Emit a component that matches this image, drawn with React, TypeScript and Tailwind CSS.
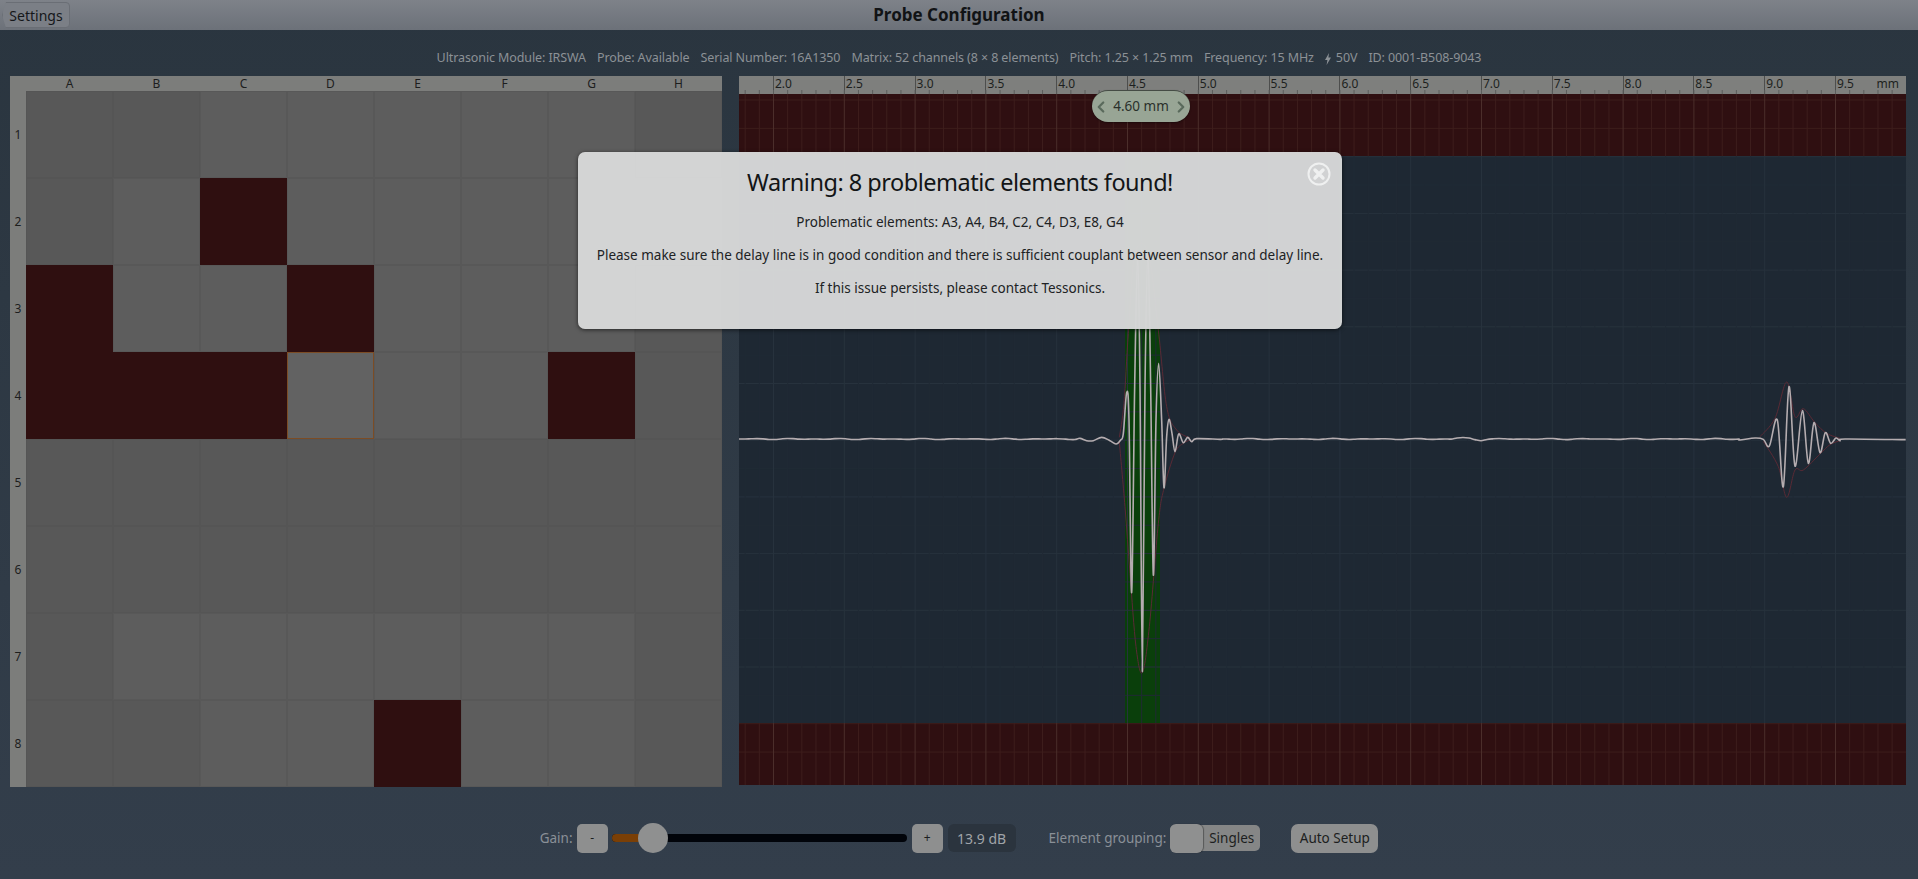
import { ChevronLeft, ChevronRight } from 'lucide-react';

type Pt = [number, number];

const COLS = ['A', 'B', 'C', 'D', 'E', 'F', 'G', 'H'];
const ROWS = [1, 2, 3, 4, 5, 6, 7, 8];

// d = darker, l = lighter, r = problematic, o = selected
const CELLS = [
  'ddllllld',
  'dlrlllll',
  'rllrllld',
  'rrrollrd',
  'dddddddd',
  'dddddddd',
  'dlllllld',
  'ddllrlld',
];

const CELL_CLASS: Record<string, string> = {
  d: 'bg-[#585858] border-[#555555]',
  l: 'bg-[#5d5d5d] border-[#585858]',
  r: 'bg-[#2f0f10] border-[#2f0f10]',
  o: 'bg-[#626262] border-[#7c4c24]',
};

const PX_PER_MM = 141.6;
const X_2MM = 34.5;
const mmX = (mm: number) => X_2MM + (mm - 2) * PX_PER_MM;

const TICKS = Array.from({ length: 82 }, (_, i) => i - 2);
const H_LINES = Array.from({ length: 24 }, (_, i) => 6 + i * 28.35);
const LABELS = ['2.0', '2.5', '3.0', '3.5', '4.0', '4.5', '5.0', '5.5', '6.0', '6.5', '7.0', '7.5', '8.0', '8.5', '9.0'];

const pulse: Pt[] = ([
  [0, 355], [20, 362], [40, 362], [65, 352], [90, 362], [108, 372], [122, 360], [130, 340], [140, 218], [147, 300],
  [155, 818], [164, 200], [173, -200], [180, 200], [187, 1055], [195, 200], [204, -200], [212, 200], [220, 765], [228, 300],
  [236, 130], [245, 300], [252, 503], [260, 350], [267, 298], [276, 340], [285, 395], [296, 342], [310, 368], [323, 352],
  [335, 365], [350, 356], [420, 358],
] as Pt[]).map(([x, y]) => [341 + x / 3, 226 + y / 3]);

const echo: Pt[] = ([
  [0, 210], [45, 204], [70, 208], [88, 228], [112, 150], [130, 350], [147, 50], [165, 288], [187, 122], [205, 280],
  [222, 158], [240, 248], [256, 188], [272, 220], [288, 204], [300, 212], [315, 207], [497, 209],
] as Pt[]).map(([x, y]) => [1001 + x / 3, 276 + y / 3]);

const pulseEnvTop: Pt[] = ([
  [118, 352], [132, 250], [145, 40], [165, -200], [205, -200], [235, 30], [260, 260], [290, 330], [330, 354],
] as Pt[]).map(([x, y]) => [341 + x / 3, 226 + y / 3]);
const pulseEnvBottom: Pt[] = ([
  [118, 366], [135, 560], [150, 760], [168, 980], [187, 1058], [208, 920], [235, 610], [252, 505], [285, 398], [310, 370], [330, 360],
] as Pt[]).map(([x, y]) => [341 + x / 3, 226 + y / 3]);
const echoEnvTop: Pt[] = ([
  [60, 200], [105, 145], [140, 36], [165, 140], [190, 116], [225, 158], [260, 190], [300, 205],
] as Pt[]).map(([x, y]) => [1001 + x / 3, 276 + y / 3]);
const echoEnvBottom: Pt[] = ([
  [70, 214], [115, 290], [140, 382], [165, 300], [190, 300], [240, 252], [270, 224], [300, 212],
] as Pt[]).map(([x, y]) => [1001 + x / 3, 276 + y / 3]);

const wiggle = (from: number, to: number): Pt[] => {
  const pts: Pt[] = [];
  for (let x = from; x < to; x += 6) {
    const bump = x > 715 && x < 745 ? 1.6 : 0.3;
    pts.push([x, 345 + Math.sin(x * 0.9) * bump + Math.sin(x * 0.23) * 0.3]);
  }
  return pts;
};

// catmull-rom through the points, so the wave stays smooth
const smooth = (p: Pt[]) => {
  let d = `M${p[0][0]} ${p[0][1]}`;
  for (let i = 0; i < p.length - 1; i++) {
    const a = p[Math.max(i - 1, 0)];
    const b = p[i];
    const c = p[i + 1];
    const e = p[Math.min(i + 2, p.length - 1)];
    const c1x = b[0] + (c[0] - a[0]) / 6;
    const c1y = b[1] + (c[1] - a[1]) / 6;
    const c2x = c[0] - (e[0] - b[0]) / 6;
    const c2y = c[1] - (e[1] - b[1]) / 6;
    d += ` C${c1x} ${c1y} ${c2x} ${c2y} ${c[0]} ${c[1]}`;
  }
  return d;
};

const wave = smooth([...wiggle(0, 341), ...pulse, ...wiggle(484, 1001), ...echo]);

function Plot() {
  return (
    <svg className="block w-[1167px] h-[691px]" viewBox="0 0 1167 691">
      <rect width="1167" height="691" fill="#1e2833" />
      <rect width="1167" height="62" fill="#2f0f11" />
      <rect y="629" width="1167" height="62" fill="#2f0f11" />
      <rect x="386" y="62" width="35" height="567" fill="#0a3f0b" />
      {H_LINES.map((y, i) => {
        const band = y < 62 || y > 629;
        return <line key={y} x1="0" x2="1167" y1={y} y2={y} stroke={band ? '#3d1e1c' : i % 2 === 0 ? '#27323d' : '#202a35'} />;
      })}
      {TICKS.map((t) => {
        const x = mmX(2 + t / 10);
        const major = t % 5 === 0;
        return (
          <g key={t}>
            <line x1={x} x2={x} y1="0" y2="62" stroke={major ? '#4b2e2b' : '#3e1e1d'} />
            <line x1={x} x2={x} y1="62" y2="629" stroke={major ? '#27323d' : '#202a35'} />
            <line x1={x} x2={x} y1="629" y2="691" stroke={major ? '#4b2e2b' : '#3e1e1d'} />
          </g>
        );
      })}
      <g fill="none" stroke="#5a2a35" strokeWidth="1">
        <path d={smooth(pulseEnvTop)} />
        <path d={smooth(pulseEnvBottom)} />
        <path d={smooth(echoEnvTop)} />
        <path d={smooth(echoEnvBottom)} />
      </g>
      <path d={wave} fill="none" stroke="#b5adb0" strokeWidth="1.6" strokeLinejoin="round" />
    </svg>
  );
}

function Ruler() {
  return (
    <div className="relative h-[18px] shrink-0 flex pl-[34px] bg-[#7e7f7d] text-[12px] leading-[16px] text-[#1d1f20]">
      {LABELS.map((l) => (
        <div key={l} className="w-[70.8px] shrink-0 border-l border-[#4d4e4d] pl-[1px]">{l}</div>
      ))}
      <div className="w-[40px] shrink-0 border-l border-[#4d4e4d] pl-[1px]">9.5</div>
      <div className="ml-auto pr-[7px]">mm</div>
      <svg className="absolute left-0 bottom-0 pointer-events-none" width="1167" height="5">
        {TICKS.map((t) => (
          <line key={t} x1={mmX(2 + t / 10)} x2={mmX(2 + t / 10)} y1="1" y2="5" stroke="#5c5d5c" />
        ))}
      </svg>
    </div>
  );
}

function ElementGrid() {
  return (
    <div className="w-[712px] shrink-0 grid grid-cols-[16px_1fr] grid-rows-[15px_1fr] bg-[#7c7d7b] text-[12px] text-[#1d1e1e]">
      <div />
      <div className="flex">
        {COLS.map((c) => (
          <div key={c} className="flex-1 text-center leading-[15px]">{c}</div>
        ))}
      </div>
      <div className="flex flex-col">
        {ROWS.map((r) => (
          <div key={r} className="flex-1 flex items-center justify-center">{r}</div>
        ))}
      </div>
      <div className="grid grid-cols-8 grid-rows-8 shadow-[inset_0_2px_2px_rgba(0,0,0,0.2)]">
        {CELLS.flatMap((row, y) =>
          row.split('').map((k, x) => <div key={`${x}-${y}`} className={`border ${CELL_CLASS[k]}`} />)
        )}
      </div>
    </div>
  );
}

function Popup() {
  return (
    <div className="absolute left-[578px] top-[152px] w-[764px] h-[177px] rounded-[7px] bg-[#d5d6d6]/[0.98] shadow-[0_1px_4px_rgba(0,0,0,0.6)] flex flex-col items-center pt-[12px] text-[#202224] text-[13.5px]">
      <h2 className="text-[23.5px] leading-[36px] tracking-[-0.5px] text-[#131516] mb-[6px]">Warning: 8 problematic elements found!</h2>
      <p className="leading-[33px]">Problematic elements: A3, A4, B4, C2, C4, D3, E8, G4</p>
      <p className="leading-[33px]">Please make sure the delay line is in good condition and there is sufficient couplant between sensor and delay line.</p>
      <p className="leading-[33px]">If this issue persists, please contact Tessonics.</p>
      <svg className="absolute right-[11px] top-[10px]" width="24" height="24" viewBox="0 0 24 24">
        <circle cx="12" cy="12" r="10.5" fill="none" stroke="#eff0f0" strokeWidth="2" />
        <path d="M8 8l8 8M16 8l-8 8" stroke="#eff0f0" strokeWidth="3.4" strokeLinecap="round" />
      </svg>
    </div>
  );
}

const btn = 'h-[29px] rounded-[5px] bg-[#8e8f8f] text-[#1c1e20] flex items-center justify-center';

export default function App() {
  return (
    <div
      className="relative h-[879px] overflow-hidden flex flex-col bg-gradient-to-b from-[#2a353f] to-[#333e4b]"
      style={{ fontFamily: '"Noto Sans", sans-serif' }}
    >
      <header className="h-[30px] shrink-0 grid grid-cols-[1fr_auto_1fr] items-center px-[2px] bg-gradient-to-b from-[#7e8289] to-[#6c7179]">
        <div>
          <button className="w-[68px] h-[26px] rounded-[4px] border border-[#6a6e75] bg-[#7b7f86] text-[14px] text-[#15171a] [clip-path:polygon(4px_0,100%_0,100%_100%,4px_100%,0_50%)]">
            Settings
          </button>
        </div>
        <h1 className="text-[17px] font-bold text-[#111315]">Probe Configuration</h1>
        <div />
      </header>

      <div className="h-[46px] shrink-0 flex items-center justify-center gap-[11px] text-[12.5px] tracking-[-0.1px] text-[#8c9196] pt-[11px]">
        <span>Ultrasonic Module: IRSWA</span>
        <span>Probe: Available</span>
        <span>Serial Number: 16A1350</span>
        <span>Matrix: 52 channels (8 × 8 elements)</span>
        <span>Pitch: 1.25 × 1.25 mm</span>
        <span>Frequency: 15 MHz</span>
        <span className="flex items-center gap-[5px]">
          <svg width="6" height="12" viewBox="0 0 6 12"><path d="M4 0L0 7h2.4L1.6 12 6 4.6H3.4z" fill="#8c9196" /></svg>
          50V
        </span>
        <span>ID: 0001-B508-9043</span>
      </div>

      <main className="h-[711px] shrink-0 flex gap-[17px] pl-[10px]">
        <ElementGrid />
        <section className="relative w-[1167px] shrink-0 flex flex-col">
          <Ruler />
          <Plot />
          <div className="absolute left-[353px] top-[14px] w-[98px] h-[32px] rounded-full bg-[#98a595] border-t border-[#454c45] flex items-center justify-between text-[13.5px] text-[#2a302b] shadow-[0_1px_2px_rgba(0,0,0,0.4)]">
            <ChevronLeft size={18} strokeWidth={3} className="text-[#5a6a5c]" />
            <span>4.60 mm</span>
            <ChevronRight size={18} strokeWidth={3} className="text-[#5a6a5c]" />
          </div>
        </section>
      </main>

      <footer className="flex-1 flex items-center justify-center pt-[10px] text-[13.5px] text-[#8a9097]">
        <span className="mr-[4px]">Gain:</span>
        <button className={`${btn} w-[31px] text-[12px]`}>-</button>
        <div className="relative w-[295px] h-[8px] ml-[4px] mr-[5px] rounded-full bg-[#01040a]">
          <div className="w-[30px] h-full rounded-l-full bg-[#7a3f06]" />
          <div className="absolute left-[26px] -top-[11px] w-[30px] h-[30px] rounded-full bg-[#8f9090]" />
        </div>
        <button className={`${btn} w-[31px] text-[12px]`}>+</button>
        <span className="ml-[5px] w-[68px] h-[28px] rounded-[6px] bg-[#2b343e] flex items-center justify-center text-[#a0a4a8] text-[14px]">13.9 dB</span>
        <span className="ml-[33px] mr-[4px]">Element grouping:</span>
        <div className="relative w-[90px] h-[26px] rounded-[5px] bg-[#858686] text-[#1c1e20] flex items-center justify-end pr-[6px]">
          <div className="absolute left-0 -top-[1px] w-[33px] h-[29px] rounded-[6px] bg-[#8f9090] shadow-[1px_0_1px_rgba(0,0,0,0.35)]" />
          Singles
        </div>
        <button className={`${btn} ml-[31px] w-[87px] rounded-[7px] text-[13.5px]`}>Auto Setup</button>
      </footer>

      <Popup />
    </div>
  );
}
